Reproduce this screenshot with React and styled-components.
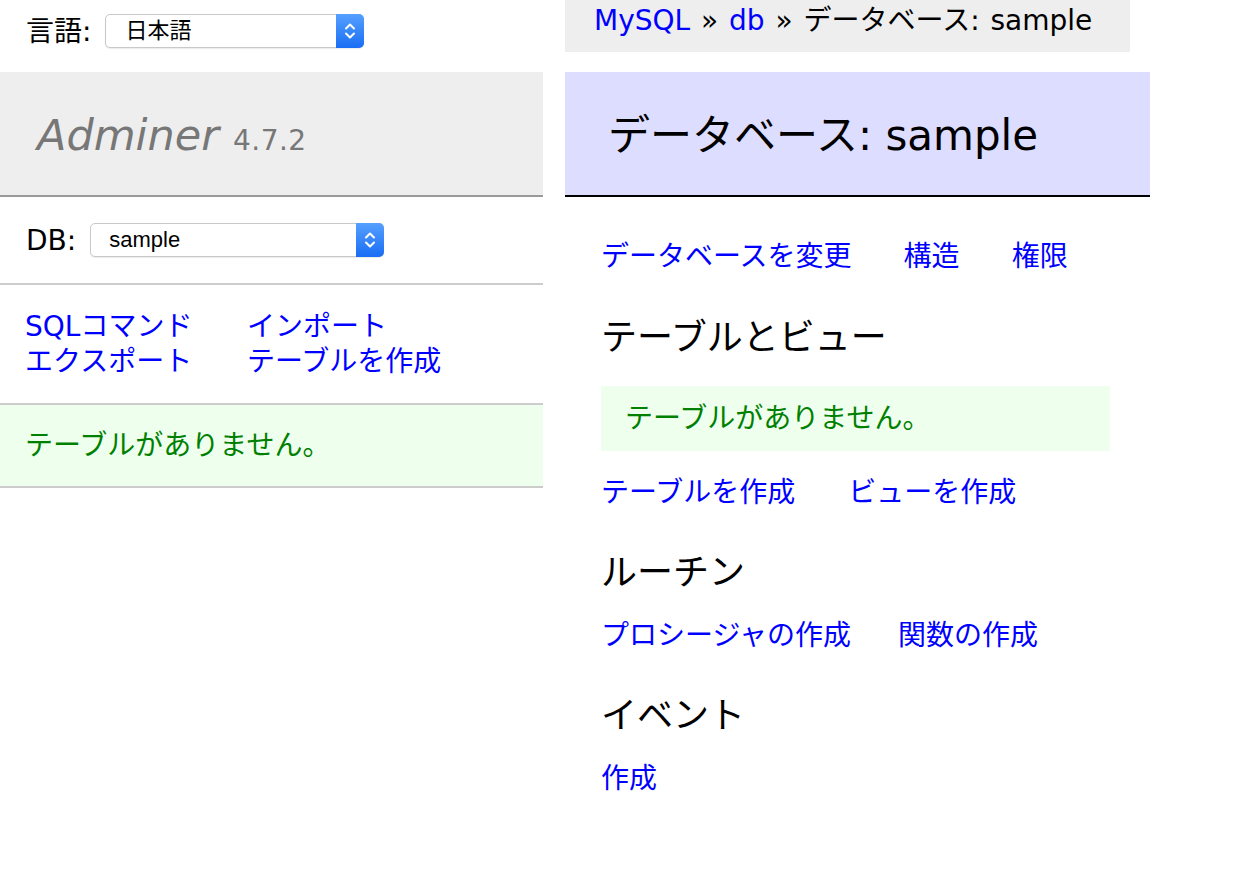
import React from 'react';
import styled, { createGlobalStyle } from 'styled-components';

const GlobalStyle = createGlobalStyle`
  body {
    margin: 0;
    background: #fff;
    color: #000;
    font: 28px/35px "DejaVu Sans", "Noto Sans CJK JP", sans-serif;
  }
  a {
    color: #00f;
    text-decoration: none;
  }
`;

const Page = styled.div`
  display: flex;
  align-items: flex-start;
  gap: 22px;
`;

const Sidebar = styled.nav`
  width: 543px;
  flex: none;
`;

const FormRow = styled.div`
  display: flex;
  align-items: center;
  gap: ${(props) => props.$gap}px;
  padding: 0 26px;
  box-sizing: border-box;
`;

const LangRow = styled(FormRow)`
  height: 72px;
  padding-bottom: 10px;
`;

const DbRow = styled(FormRow)`
  height: 86px;
  border-bottom: 2px solid #ccc;
  box-sizing: content-box;
`;

const SelectBox = styled.div`
  width: ${(props) => props.$width}px;
  height: 34px;
  box-sizing: border-box;
  display: flex;
  align-items: center;
  justify-content: space-between;
  padding-left: ${(props) => props.$pad}px;
  background: #fff;
  border: 1px solid #c9c9c9;
  border-radius: 5px;
  box-shadow: 0 1px 1px rgba(0, 0, 0, 0.08);
  font: 22px/1 "Liberation Sans", "Noto Sans CJK JP", sans-serif;
  color: #000;
`;

const Stepper = styled.span`
  align-self: stretch;
  width: 28px;
  margin: -1px -1px -1px 0;
  border-radius: 0 5px 5px 0;
  background: linear-gradient(#55a0ff, #1a6df4);
  display: flex;
  align-items: center;
  justify-content: center;
`;

const Logo = styled.h1`
  margin: 0;
  height: 125px;
  box-sizing: border-box;
  padding: 37px 0 0 37px;
  display: flex;
  align-items: baseline;
  gap: 14px;
  background: #eee;
  border-bottom: 2px solid #999;
  font-size: 43px;
  line-height: 52px;
  font-weight: normal;
  font-style: italic;
  color: #777;
`;

const Version = styled.span`
  font-size: 28px;
  line-height: 1;
  font-style: normal;
  color: #777;
  letter-spacing: 0.5px;
`;

const MenuLinks = styled.div`
  display: grid;
  grid-template-columns: 222px auto;
  justify-content: start;
  padding: 24px 25px;
  border-bottom: 2px solid #ccc;
`;

const Message = styled.p`
  margin: ${(props) => props.$mt || 0}px ${(props) => props.$mr || 0}px 0 0;
  padding: ${(props) => props.$pv}px ${(props) => props.$ph}px;
  background: #efe;
  color: green;
  ${(props) => props.$ruled && 'border-bottom: 2px solid #ccc;'}
`;

const Main = styled.main`
  width: 585px;
  flex: none;
`;

const Breadcrumb = styled.p`
  width: 565px;
  box-sizing: border-box;
  margin: 0 0 20px;
  height: 52px;
  padding: 0 29px;
  background: #eee;
  line-height: 42px;
  white-space: nowrap;
  word-spacing: 2px;
`;

const Title = styled.h2`
  margin: 0;
  padding: 38px 0 33px 43px;
  background: #ddf;
  border-bottom: 2px solid #000;
  font-size: 42px;
  line-height: 52px;
  font-weight: normal;
`;

const Content = styled.div`
  padding: 42px 0 40px 36px;
`;

const LinkRow = styled.p`
  display: flex;
  gap: ${(props) => props.$gap}px;
  margin: ${(props) => props.$mt || 0}px 0 0;
`;

const Heading = styled.h3`
  margin: ${(props) => props.$mt}px 0 0;
  font-size: 36px;
  line-height: 46px;
  font-weight: normal;
`;

const Chevrons = () => (
  <svg width="14" height="22" viewBox="0 0 14 22" fill="none" stroke="#fff" strokeWidth="2" strokeLinecap="round" strokeLinejoin="round">
    <path d="M3 8.5 L7 4.5 L11 8.5" />
    <path d="M3 13.5 L7 17.5 L11 13.5" />
  </svg>
);

const Select = ({ width, pad, value }) => (
  <SelectBox $width={width} $pad={pad}>
    <span>{value}</span>
    <Stepper>
      <Chevrons />
    </Stepper>
  </SelectBox>
);

const App = () => {
  return (
    <>
      <GlobalStyle />
      <Page>
        <Sidebar>
          <LangRow $gap={14}>
            <span>言語:</span>
            <Select width={259} pad={19} value="日本語" />
          </LangRow>
          <Logo>
            Adminer <Version>4.7.2</Version>
          </Logo>
          <DbRow $gap={14}>
            <span>DB:</span>
            <Select width={294} pad={18} value="sample" />
          </DbRow>
          <MenuLinks>
            <a href="#sql">SQLコマンド</a>
            <a href="#import">インポート</a>
            <a href="#dump">エクスポート</a>
            <a href="#create">テーブルを作成</a>
          </MenuLinks>
          <Message $pv={23} $ph={25} $ruled>
            テーブルがありません。
          </Message>
        </Sidebar>
        <Main>
          <Breadcrumb>
            <a href="#mysql">MySQL</a> » <a href="#db">db</a> » データベース: sample
          </Breadcrumb>
          <Title>データベース: sample</Title>
          <Content>
            <LinkRow $gap={52}>
              <a href="#alter">データベースを変更</a>
              <a href="#schema">構造</a>
              <a href="#privileges">権限</a>
            </LinkRow>
            <Heading $mt={41}>テーブルとビュー</Heading>
            <Message $mt={25} $mr={40} $pv={15} $ph={24}>
              テーブルがありません。
            </Message>
            <LinkRow $gap={53} $mt={24}>
              <a href="#create">テーブルを作成</a>
              <a href="#view">ビューを作成</a>
            </LinkRow>
            <Heading $mt={40}>ルーチン</Heading>
            <LinkRow $gap={47} $mt={22}>
              <a href="#procedure">プロシージャの作成</a>
              <a href="#function">関数の作成</a>
            </LinkRow>
            <Heading $mt={40}>イベント</Heading>
            <LinkRow $gap={0} $mt={22}>
              <a href="#event">作成</a>
            </LinkRow>
          </Content>
        </Main>
      </Page>
    </>
  );
};

export default App;
